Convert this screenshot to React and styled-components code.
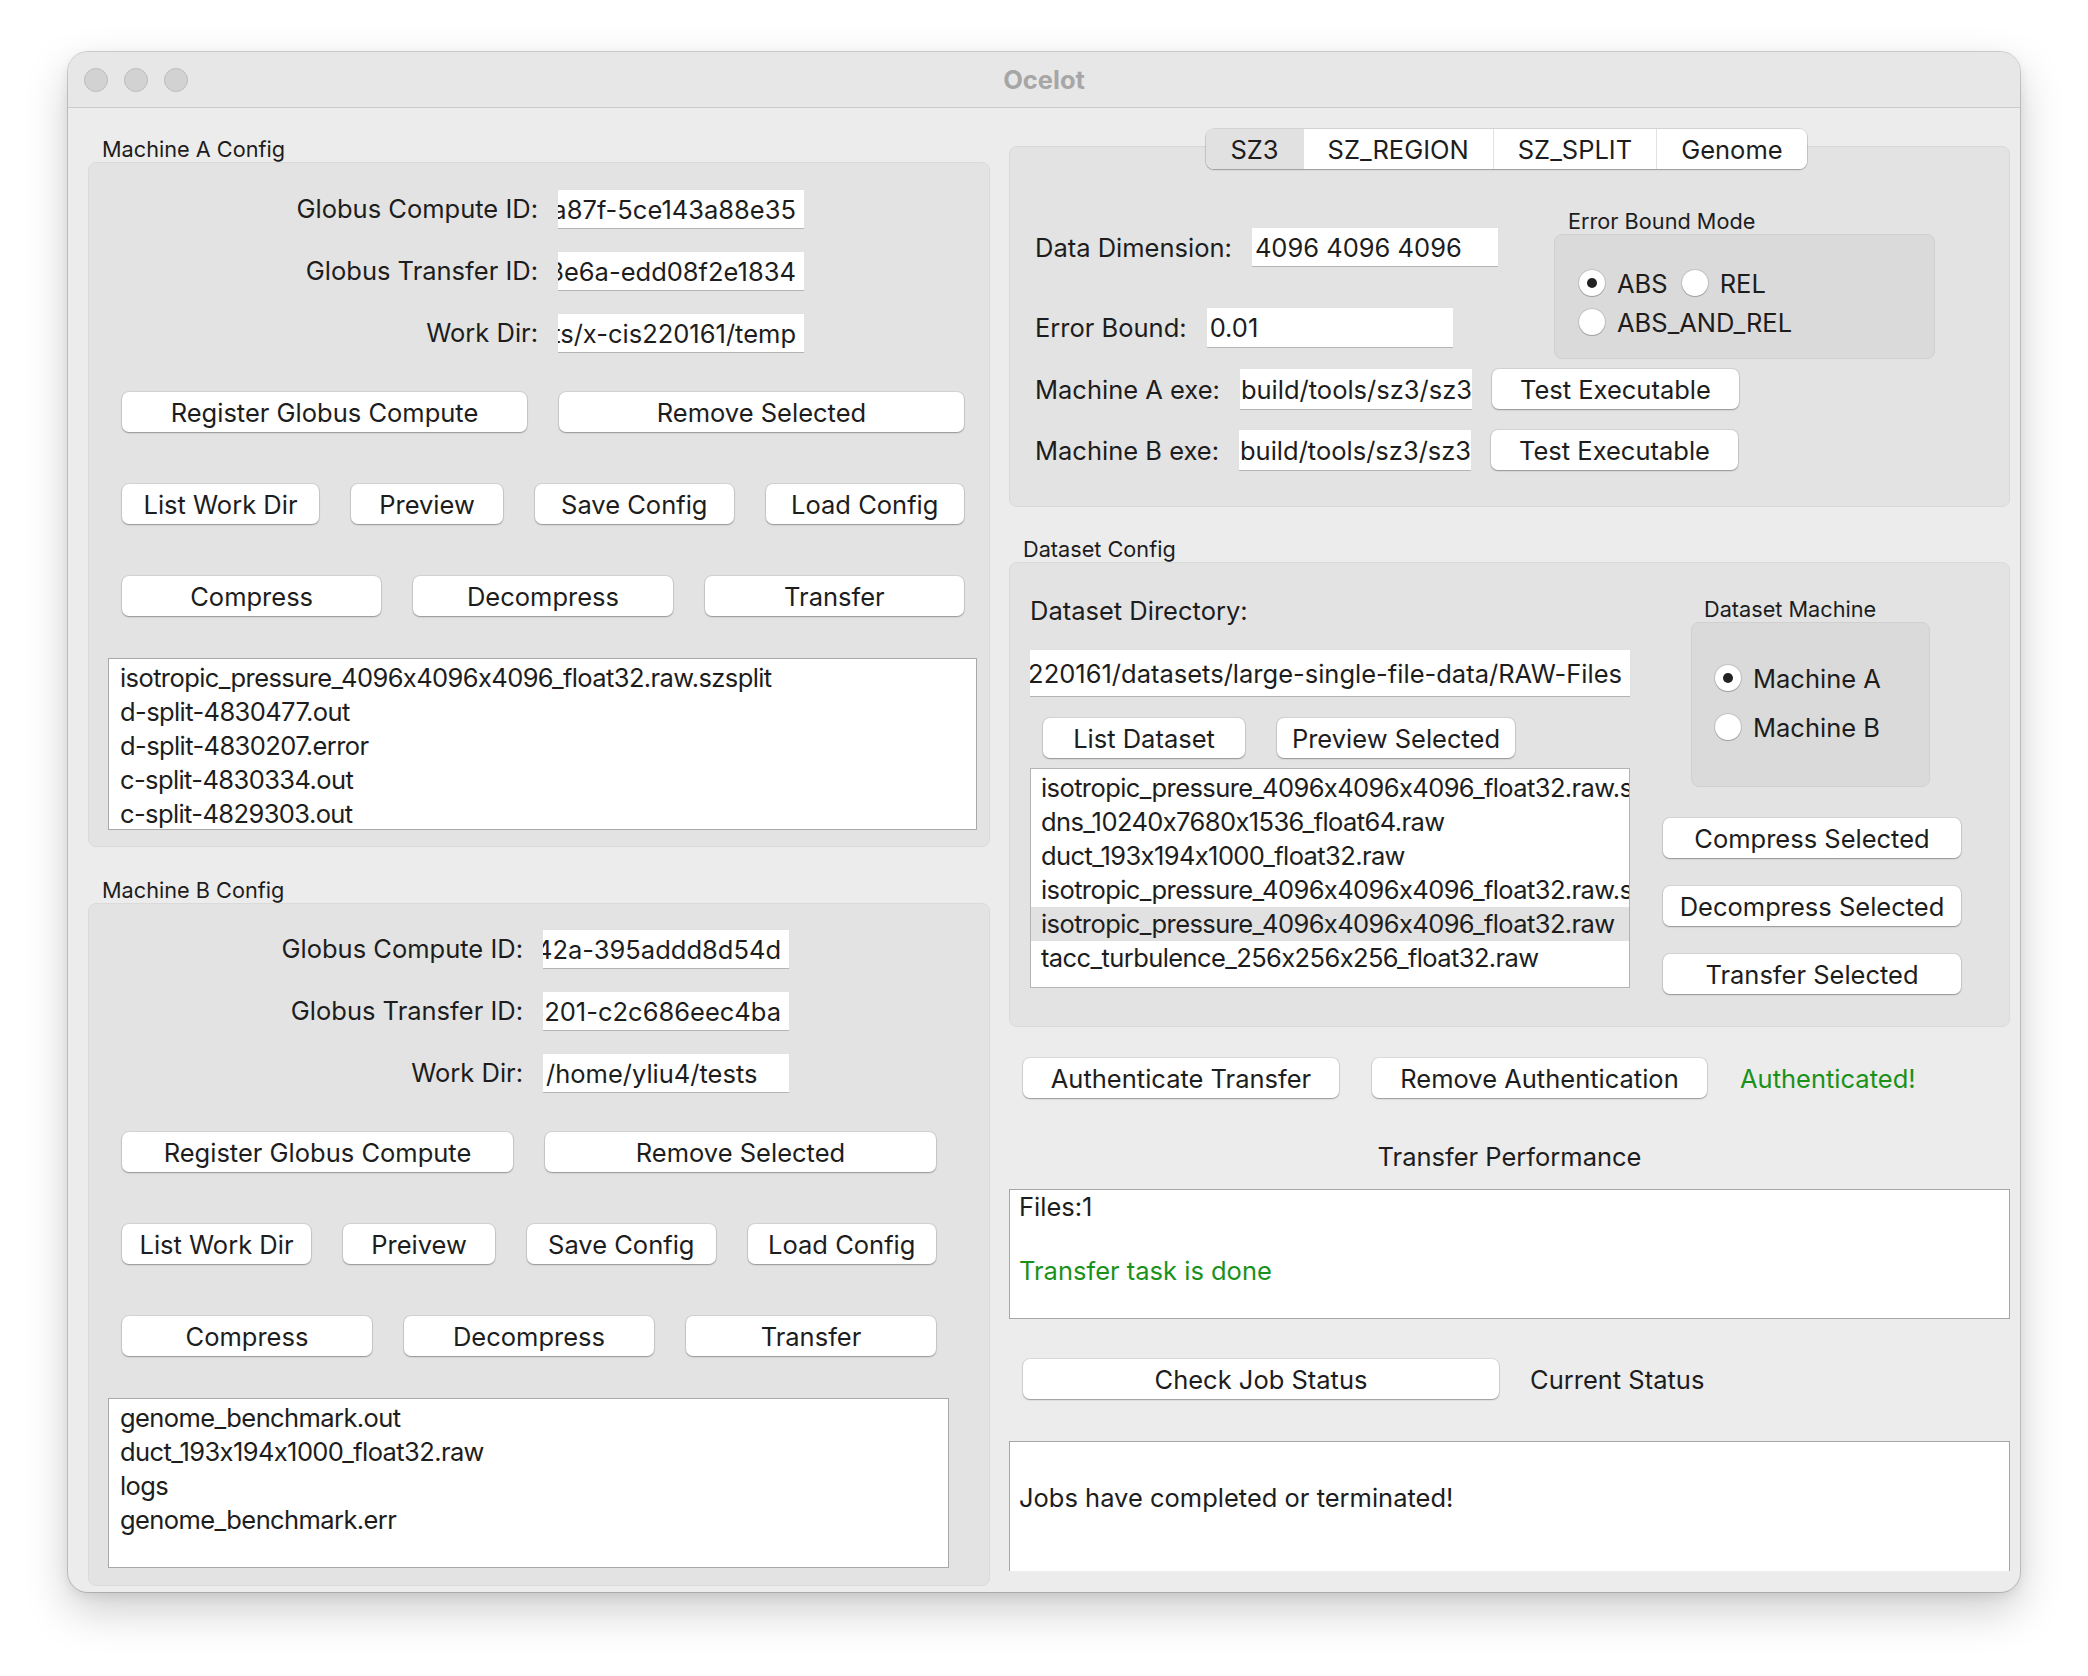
import styled, { createGlobalStyle } from "styled-components";

const FS = 25.5;

const GlobalStyle = createGlobalStyle`
  * { box-sizing: border-box; }
  body {
    margin: 0;
    background: #ffffff;
    font-family: Inter, "Noto Sans", "Liberation Sans", sans-serif;
    font-feature-settings: "calt" 0;
    color: #1d1d1d;
  }
`;

const Page = styled.div`
  width: 2088px;
  height: 1676px;
  padding: 52px 0 0 68px;
`;

const Window = styled.div`
  width: 1952px;
  height: 1540px;
  border-radius: 20px;
  overflow: hidden;
  background: #ececec;
  box-shadow: 0 0 0 1px rgba(0, 0, 0, 0.16), 0 18px 45px rgba(0, 0, 0, 0.2),
    0 4px 12px rgba(0, 0, 0, 0.08);
`;

const TitleBar = styled.div`
  height: 56px;
  padding: 0 16px;
  background: #e7e7e7;
  border-bottom: 1px solid #cbcbcb;
  display: grid;
  grid-template-columns: 1fr auto 1fr;
  align-items: center;
`;

const Lights = styled.div`
  display: flex;
  gap: 16px;
`;

const Light = styled.span`
  width: 24px;
  height: 24px;
  border-radius: 50%;
  background: #d2d2d2;
  border: 1px solid #bcbcbc;
`;

const Title = styled.div`
  font-size: ${FS}px;
  font-weight: 700;
  color: #a6a6a6;
`;

const Content = styled.div`
  display: grid;
  grid-template-columns: 902px 1001px;
  column-gap: 19px;
  padding-left: 20px;
`;

const Column = styled.div`
  display: flex;
  flex-direction: column;
`;

const GroupTitle = styled.div`
  margin-top: ${(p) => p.$mt}px;
  padding-left: ${(p) => p.$pl || 14}px;
  font-size: 21.7px;
  line-height: ${(p) => p.$lh || 26}px;
`;

const GroupBox = styled.div`
  height: ${(p) => p.$h}px;
  padding: ${(p) => p.$pt}px ${(p) => p.$pr}px 0 33px;
  background: #e3e3e3;
  border: 1px solid #dadada;
  border-radius: 8px;
`;

const FormGrid = styled.div`
  display: grid;
  grid-template-columns: ${(p) => p.$labelW}px 246px;
  grid-auto-rows: 38px;
  column-gap: 20px;
  row-gap: 24px;
`;

const FieldLabel = styled.div`
  font-size: ${FS}px;
  line-height: 38px;
  text-align: right;
  white-space: nowrap;
`;

const Field = styled.div`
  width: ${(p) => p.$w}px;
  height: ${(p) => p.$h || 38}px;
  padding: 0 ${(p) => (p.$end ? 8 : 3)}px 0 ${(p) => p.$padL ?? 3}px;
  background: #ffffff;
  box-shadow: 0 1px 0 #b4b4b4, 0 0 0 1px #e2e2e2;
  display: flex;
  align-items: center;
  justify-content: ${(p) => (p.$end ? "flex-end" : "flex-start")};
  overflow: hidden;
  white-space: nowrap;
  font-size: ${FS}px;
  flex-shrink: 0;
`;

const ButtonRow = styled.div`
  margin-top: ${(p) => p.$mt}px;
  display: grid;
  grid-template-columns: ${(p) => p.$cols};
  column-gap: 32px;
`;

const Button = styled.button`
  height: 40px;
  width: ${(p) => (p.$w ? `${p.$w}px` : "auto")};
  margin-top: ${(p) => p.$mt || 0}px;
  padding: 0;
  border: none;
  border-radius: 7px;
  background: #ffffff;
  box-shadow: 0 0 0 1px rgba(0, 0, 0, 0.07), 0 1px 1.5px rgba(0, 0, 0, 0.3);
  font-family: inherit;
  font-feature-settings: "calt" 0;
  font-size: ${FS}px;
  color: #1d1d1d;
  white-space: nowrap;
  flex-shrink: 0;
`;

const ListBox = styled.div`
  height: ${(p) => p.$h}px;
  margin: ${(p) => p.$mt}px ${(p) => p.$mr ?? -13}px 0 ${(p) => p.$ml ?? -14}px;
  padding-top: 2px;
  background: #ffffff;
  border: 1px solid ${(p) => p.$border || "#a8a8a8"};
  overflow: hidden;
`;

const ListItem = styled.div`
  padding-left: ${(p) => p.$pl || 11}px;
  font-size: ${FS}px;
  line-height: 34px;
  letter-spacing: -0.6px;
  white-space: nowrap;
  overflow: hidden;
  background: ${(p) => (p.$selected ? "#e1e1e1" : "transparent")};
`;

const TabBar = styled.div`
  position: relative;
  z-index: 1;
  align-self: center;
  height: 40px;
  margin: 21px 0 -23px -6px;
  display: flex;
  background: #ffffff;
  border-radius: 8px;
  overflow: hidden;
  box-shadow: 0 0 0 1px rgba(0, 0, 0, 0.1), 0 1px 1.5px rgba(0, 0, 0, 0.25);
`;

const Tab = styled.div`
  padding: 0 24px;
  display: flex;
  align-items: center;
  font-size: ${FS}px;
  background: ${(p) => (p.$active ? "#e1e1e1" : "#ffffff")};
  & + & {
    border-left: 1px solid #e2e2e2;
  }
`;

const Pane = styled.div`
  height: 361px;
  padding: 62px 0 0 25px;
  background: #e3e3e3;
  border: 1px solid #d8d8d8;
  border-radius: 8px;
`;

const TopSection = styled.div`
  display: flex;
`;

const SettingsCol = styled.div`
  width: 519px;
  display: flex;
  flex-direction: column;
`;

const Row = styled.div`
  margin-top: ${(p) => p.$mt || 0}px;
  padding-left: ${(p) => p.$pl || 0}px;
  display: flex;
  align-items: center;
  gap: ${(p) => p.$gap ?? 20}px;
`;

const Text = styled.span`
  font-size: ${FS}px;
  white-space: nowrap;
  color: ${(p) => p.$color || "inherit"};
`;

const RadioGroup = styled.div`
  display: flex;
  flex-direction: column;
  margin-left: ${(p) => p.$ml || 0}px;
`;

const RadioBox = styled.div`
  width: ${(p) => p.$w}px;
  height: ${(p) => p.$h}px;
  padding: ${(p) => p.$pt}px 0 0 ${(p) => p.$pl}px;
  background: #dadada;
  border: 1px solid #d0d0d0;
  border-radius: 8px;
  display: flex;
  flex-direction: column;
  gap: ${(p) => p.$gap}px;
`;

const Option = styled.label`
  height: 30px;
  display: flex;
  align-items: center;
  gap: 12px;
  font-size: ${FS}px;
`;

const Radio = styled.span`
  width: 26px;
  height: 26px;
  border-radius: 50%;
  background: #ffffff;
  box-shadow: 0 0 0 1px rgba(0, 0, 0, 0.1), 0 1px 1px rgba(0, 0, 0, 0.2);
  display: inline-flex;
  align-items: center;
  justify-content: center;
  flex-shrink: 0;
  &::after {
    content: "";
    display: ${(p) => (p.$on ? "block" : "none")};
    width: 10px;
    height: 10px;
    border-radius: 50%;
    background: #222;
  }
`;

const DataBox = styled.div`
  height: 465px;
  padding-left: 20px;
  background: #e3e3e3;
  border: 1px solid #dadada;
  border-radius: 8px;
  display: flex;
`;

const DataLeft = styled.div`
  width: 600px;
  display: flex;
  flex-direction: column;
`;

const DataRight = styled.div`
  width: 298px;
  margin-left: 33px;
  display: flex;
  flex-direction: column;
  gap: 28px;
`;

const Caption = styled.div`
  margin-top: ${(p) => p.$mt || 0}px;
  font-size: ${FS}px;
  line-height: 30px;
  text-align: ${(p) => (p.$center ? "center" : "left")};
`;

const OutputBox = styled.div`
  height: 130px;
  margin-top: ${(p) => p.$mt}px;
  padding: ${(p) => p.$pt}px 9px 0;
  background: #ffffff;
  border: 1px solid #a5a5a5;
  border-bottom: ${(p) => (p.$open ? "none" : "1px solid #a5a5a5")};
  font-size: ${FS}px;
  line-height: 32px;
`;

const Line = styled.div`
  height: 32px;
  color: ${(p) => p.$color || "inherit"};
`;

const GREEN = "#1a921a";

const MachineGroup = ({ title, mt, h, pt, pr, labelW, fields, rows, files, listH }) => (
  <>
    <GroupTitle $mt={mt}>{title}</GroupTitle>
    <GroupBox $h={h} $pt={pt} $pr={pr}>
      <FormGrid $labelW={labelW}>
        {fields.map(([label, value, end]) => [
          <FieldLabel key={`${label}-l`}>{label}</FieldLabel>,
          <Field key={`${label}-f`} $w={246} $end={end} $padL={end ? 0 : 3}>
            {value}
          </Field>,
        ])}
      </FormGrid>
      {rows.map((row, i) => (
        <ButtonRow key={i} $mt={i === 0 ? 40 : 52} $cols={row.cols}>
          {row.items.map((b) => (
            <Button key={b}>{b}</Button>
          ))}
        </ButtonRow>
      ))}
      <ListBox $h={listH} $mt={42}>
        {files.map((f) => (
          <ListItem key={f}>{f}</ListItem>
        ))}
      </ListBox>
    </GroupBox>
  </>
);

export default function App() {
  return (
    <Page>
      <GlobalStyle />
      <Window>
        <TitleBar>
          <Lights>
            <Light />
            <Light />
            <Light />
          </Lights>
          <Title>Ocelot</Title>
          <div />
        </TitleBar>
        <Content>
          <Column>
            <MachineGroup
              title="Machine A Config"
              mt={28}
              h={685}
              pt={27}
              pr={25}
              labelW={416}
              listH={172}
              fields={[
                ["Globus Compute ID:", "a87f-5ce143a88e35", true],
                ["Globus Transfer ID:", "3e6a-edd08f2e1834", true],
                ["Work Dir:", "ts/x-cis220161/temp", true],
              ]}
              rows={[
                { cols: "1fr 1fr", items: ["Register Globus Compute", "Remove Selected"] },
                { cols: "197px 152px 1fr 1fr", items: ["List Work Dir", "Preview", "Save Config", "Load Config"] },
                { cols: "1fr 1fr 1fr", items: ["Compress", "Decompress", "Transfer"] },
              ]}
              files={[
                "isotropic_pressure_4096x4096x4096_float32.raw.szsplit",
                "d-split-4830477.out",
                "d-split-4830207.error",
                "c-split-4830334.out",
                "c-split-4829303.out",
              ]}
            />
            <MachineGroup
              title="Machine B Config"
              mt={30}
              h={683}
              pt={26}
              pr={53}
              labelW={401}
              listH={170}
              fields={[
                ["Globus Compute ID:", "42a-395addd8d54d", true],
                ["Globus Transfer ID:", "8201-c2c686eec4ba", true],
                ["Work Dir:", "/home/yliu4/tests", false],
              ]}
              rows={[
                { cols: "1fr 1fr", items: ["Register Globus Compute", "Remove Selected"] },
                { cols: "189px 152px 1fr 1fr", items: ["List Work Dir", "Preivew", "Save Config", "Load Config"] },
                { cols: "1fr 1fr 1fr", items: ["Compress", "Decompress", "Transfer"] },
              ]}
              files={[
                "genome_benchmark.out",
                "duct_193x194x1000_float32.raw",
                "logs",
                "genome_benchmark.err",
              ]}
            />
          </Column>

          <Column>
            <TabBar>
              <Tab $active>SZ3</Tab>
              <Tab>SZ_REGION</Tab>
              <Tab>SZ_SPLIT</Tab>
              <Tab>Genome</Tab>
            </TabBar>
            <Pane>
              <TopSection>
                <SettingsCol>
                  <Row $mt={19}>
                    <Text>Data Dimension:</Text>
                    <Field $w={246}>4096 4096 4096</Field>
                  </Row>
                  <Row $mt={42}>
                    <Text>Error Bound:</Text>
                    <Field $w={246} $h={39}>0.01</Field>
                  </Row>
                </SettingsCol>
                <RadioGroup>
                  <GroupTitle $mt={0} $lh={25}>Error Bound Mode</GroupTitle>
                  <RadioBox $w={381} $h={125} $pt={33} $pl={24} $gap={9}>
                    <Row $gap={14}>
                      <Option>
                        <Radio $on />
                        ABS
                      </Option>
                      <Option>
                        <Radio />
                        REL
                      </Option>
                    </Row>
                    <Option>
                      <Radio />
                      ABS_AND_REL
                    </Option>
                  </RadioBox>
                </RadioGroup>
              </TopSection>
              <Row $mt={10}>
                <Text>Machine A exe:</Text>
                <Field $w={232} $h={40} $padL={1}>build/tools/sz3/sz3</Field>
                <Button $w={247}>Test Executable</Button>
              </Row>
              <Row $mt={21}>
                <Text>Machine B exe:</Text>
                <Field $w={232} $h={40} $padL={1}>build/tools/sz3/sz3</Field>
                <Button $w={247}>Test Executable</Button>
              </Row>
            </Pane>

            <GroupTitle $mt={29}>Dataset Config</GroupTitle>
            <DataBox>
              <DataLeft>
                <Caption $mt={33}>Dataset Directory:</Caption>
                <Row $mt={24}>
                  <Field $w={600} $h={46} $end $padL={0}>
                    220161/datasets/large-single-file-data/RAW-Files
                  </Field>
                </Row>
                <Row $mt={22} $pl={13} $gap={32}>
                  <Button $w={202}>List Dataset</Button>
                  <Button $w={238}>Preview Selected</Button>
                </Row>
                <ListBox $h={220} $mt={10} $ml={0} $mr={0} $border="#b4b4b4">
                  <ListItem $pl={10}>isotropic_pressure_4096x4096x4096_float32.raw.s</ListItem>
                  <ListItem $pl={10}>dns_10240x7680x1536_float64.raw</ListItem>
                  <ListItem $pl={10}>duct_193x194x1000_float32.raw</ListItem>
                  <ListItem $pl={10}>isotropic_pressure_4096x4096x4096_float32.raw.s</ListItem>
                  <ListItem $pl={10} $selected>
                    isotropic_pressure_4096x4096x4096_float32.raw
                  </ListItem>
                  <ListItem $pl={10}>tacc_turbulence_256x256x256_float32.raw</ListItem>
                </ListBox>
              </DataLeft>
              <DataRight>
                <RadioGroup $ml={28}>
                  <GroupTitle $mt={34} $pl={13} $lh={25}>Dataset Machine</GroupTitle>
                  <RadioBox $w={239} $h={165} $pt={40} $pl={23} $gap={19}>
                    <Option>
                      <Radio $on />
                      Machine A
                    </Option>
                    <Option>
                      <Radio />
                      Machine B
                    </Option>
                  </RadioBox>
                </RadioGroup>
                <Button $w={298} $mt={3}>Compress Selected</Button>
                <Button $w={298}>Decompress Selected</Button>
                <Button $w={298}>Transfer Selected</Button>
              </DataRight>
            </DataBox>

            <Row $mt={31} $pl={14} $gap={33}>
              <Button $w={316}>Authenticate Transfer</Button>
              <Button $w={335}>Remove Authentication</Button>
              <Text $color={GREEN}>Authenticated!</Text>
            </Row>
            <Caption $mt={44} $center>Transfer Performance</Caption>
            <OutputBox $mt={17} $pt={1}>
              <Line>Files:1</Line>
              <Line />
              <Line $color={GREEN}>Transfer task is done</Line>
            </OutputBox>
            <Row $mt={40} $pl={14} $gap={31}>
              <Button $w={476}>Check Job Status</Button>
              <Text>Current Status</Text>
            </Row>
            <OutputBox $mt={42} $pt={40} $open>
              <Line>Jobs have completed or terminated!</Line>
            </OutputBox>
          </Column>
        </Content>
      </Window>
    </Page>
  );
}
